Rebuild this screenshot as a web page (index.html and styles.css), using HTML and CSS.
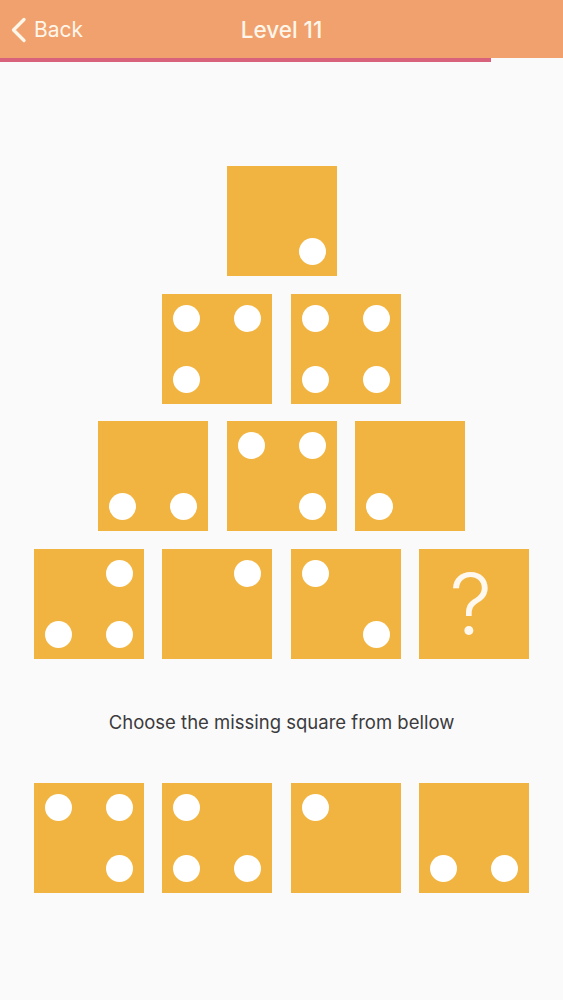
FILE: index.html
```html
<!DOCTYPE html>
<html lang="en">
<head>
<meta charset="utf-8">
<title>Level 11</title>
<link rel="stylesheet" href="styles.css">
</head>
<body>
<header class="topbar">
  <a class="back" href="#">
    <svg class="chev" width="17" height="26" viewBox="0 0 17 26"><path d="M14 2.5 L3.5 13 L14 23.5" fill="none" stroke="currentColor" stroke-width="3.3" stroke-linecap="round" stroke-linejoin="round"/></svg>
    <span>Back</span>
  </a>
  <h1 class="title">Level 11</h1>
</header>
<div class="progress"><div class="progress-fill" style="width:87.2%"></div></div>

<main class="content">
  <section class="pyramid">
    <div class="row">
      <div class="tile"><i class="dot br"></i></div>
    </div>
    <div class="row">
      <div class="tile"><i class="dot tl"></i><i class="dot tr"></i><i class="dot bl"></i></div>
      <div class="tile"><i class="dot tl"></i><i class="dot tr"></i><i class="dot bl"></i><i class="dot br"></i></div>
    </div>
    <div class="row">
      <div class="tile"><i class="dot bl"></i><i class="dot br"></i></div>
      <div class="tile"><i class="dot tl"></i><i class="dot tr"></i><i class="dot br"></i></div>
      <div class="tile"><i class="dot bl"></i></div>
    </div>
    <div class="row">
      <div class="tile"><i class="dot tr"></i><i class="dot bl"></i><i class="dot br"></i></div>
      <div class="tile"><i class="dot tr"></i></div>
      <div class="tile"><i class="dot tl"></i><i class="dot br"></i></div>
      <div class="tile tile-q"><span class="qmark">?</span></div>
    </div>
  </section>

  <p class="prompt">Choose the missing square from bellow</p>

  <section class="row choices">
    <div class="tile"><i class="dot tl"></i><i class="dot tr"></i><i class="dot br"></i></div>
    <div class="tile"><i class="dot tl"></i><i class="dot bl"></i><i class="dot br"></i></div>
    <div class="tile"><i class="dot tl"></i></div>
    <div class="tile"><i class="dot bl"></i><i class="dot br"></i></div>
  </section>
</main>
</body>
</html>
```

FILE: styles.css
```css
* { box-sizing: border-box; }

html, body {
  margin: 0;
  padding: 0;
  background: #fbfafb;
  font-family: Inter, "Liberation Sans", Arial, sans-serif;
}

.topbar {
  height: 58px;
  background: #f0a16e;
  display: flex;
  align-items: center;
  justify-content: center;
  position: relative;
}

.back {
  position: absolute;
  left: 10px;
  top: 0;
  height: 58px;
  display: flex;
  align-items: center;
  gap: 7px;
  color: #fff6ea;
  text-decoration: none;
  font-size: 21px;
  font-weight: 400;
}

.chev { display: block; margin-top: 2px; }

.title {
  margin: 0;
  color: #fff6ea;
  font-size: 22.5px;
  font-weight: 500;
}

.progress {
  height: 4px;
  background: #fbfafb;
}

.progress-fill {
  height: 100%;
  background: #d8627c;
}

.content {
  display: flex;
  flex-direction: column;
  align-items: center;
}

.pyramid {
  padding-top: 104px;
  display: flex;
  flex-direction: column;
  align-items: center;
  gap: 17.7px;
}

.row {
  display: flex;
  gap: 18.5px;
  justify-content: center;
}

.tile {
  width: 110px;
  height: 110px;
  background: #f2b441;
  display: grid;
  grid-template-columns: 27px 27px;
  grid-template-rows: 27px 27px;
  justify-content: space-between;
  align-content: space-between;
  padding: 11px;
}

.dot {
  width: 27px;
  height: 27px;
  border-radius: 50%;
  background: #ffffff;
  display: block;
}

.tl { grid-column: 1; grid-row: 1; }
.tr { grid-column: 2; grid-row: 1; }
.bl { grid-column: 1; grid-row: 2; }
.br { grid-column: 2; grid-row: 2; }

.tile-q {
  display: flex;
  align-items: center;
  justify-content: center;
  padding: 0;
}

.qmark {
  color: #fff8ee;
  font-family: Inter, "Liberation Sans", sans-serif;
  font-weight: 350;
  font-size: 85px;
  line-height: 1;
  margin-top: 1px;
  margin-left: -7px;
}

.prompt {
  margin: 52px 0 0;
  height: 22px;
  line-height: 22px;
  font-size: 18.5px;
  color: #3b3b3d;
}

.choices {
  margin-top: 50px;
}
```
